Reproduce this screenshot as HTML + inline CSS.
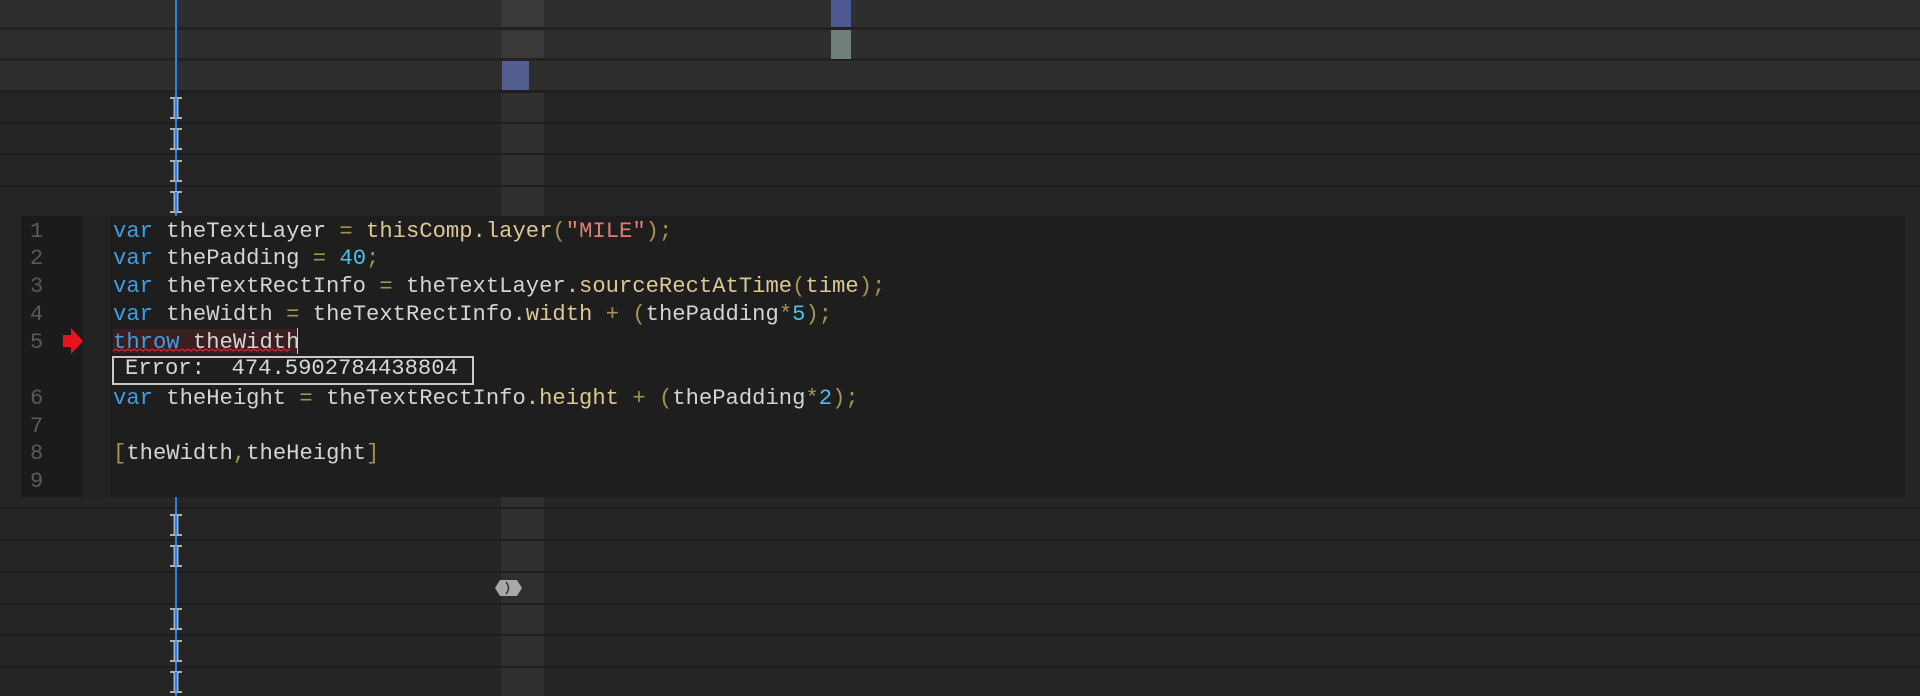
<!DOCTYPE html>
<html><head><meta charset="utf-8"><style>
body{margin:0;width:1920px;height:696px;background:#252525;position:relative;overflow:hidden;font-family:"Liberation Mono",monospace}
.a{position:absolute}
.code{position:absolute;left:113px;font-size:22.2px;white-space:pre;color:#d4d4d4;line-height:28px}
.ln{position:absolute;left:30px;font-size:22px;color:#5a5a5a;line-height:28px}
.k{color:#3f9de0}.f{color:#dcc893}.p{color:#a4944f}.s{color:#e57c72}.n{color:#46c3ea}
</style></head><body>
<div class="a" style="left:0;top:0;width:1920px;height:91px;background:#2e2e2e"></div>
<div class="a" style="left:0;top:27px;width:1920px;height:3px;background:#222"></div>
<div class="a" style="left:0;top:58px;width:1920px;height:3px;background:#222"></div>
<div class="a" style="left:0;top:90px;width:1920px;height:3px;background:#1f1f1f"></div>
<div class="a" style="left:0;top:122px;width:1920px;height:2px;background:#1e1e1e"></div>
<div class="a" style="left:0;top:153px;width:1920px;height:2px;background:#1e1e1e"></div>
<div class="a" style="left:0;top:185px;width:1920px;height:2px;background:#1e1e1e"></div>
<div class="a" style="left:0;top:507px;width:1920px;height:2px;background:#1e1e1e"></div>
<div class="a" style="left:0;top:539px;width:1920px;height:2px;background:#1e1e1e"></div>
<div class="a" style="left:0;top:571px;width:1920px;height:2px;background:#1e1e1e"></div>
<div class="a" style="left:0;top:603px;width:1920px;height:2px;background:#1e1e1e"></div>
<div class="a" style="left:0;top:634px;width:1920px;height:2px;background:#1e1e1e"></div>
<div class="a" style="left:0;top:666px;width:1920px;height:2px;background:#1e1e1e"></div>
<div class="a" style="left:501px;top:0;width:43px;height:27px;background:#393939"></div>
<div class="a" style="left:501px;top:30px;width:43px;height:28px;background:#393939"></div>
<div class="a" style="left:501px;top:93px;width:43px;height:603px;background:#2f2f2f"></div>
<div class="a" style="left:501px;top:122px;width:43px;height:2px;background:#1e1e1e"></div>
<div class="a" style="left:501px;top:153px;width:43px;height:2px;background:#1e1e1e"></div>
<div class="a" style="left:501px;top:185px;width:43px;height:2px;background:#1e1e1e"></div>
<div class="a" style="left:501px;top:507px;width:43px;height:2px;background:#1e1e1e"></div>
<div class="a" style="left:501px;top:539px;width:43px;height:2px;background:#1e1e1e"></div>
<div class="a" style="left:501px;top:571px;width:43px;height:2px;background:#1e1e1e"></div>
<div class="a" style="left:501px;top:603px;width:43px;height:2px;background:#1e1e1e"></div>
<div class="a" style="left:501px;top:634px;width:43px;height:2px;background:#1e1e1e"></div>
<div class="a" style="left:501px;top:666px;width:43px;height:2px;background:#1e1e1e"></div>
<div class="a" style="left:502px;top:61px;width:27px;height:29px;background:#535e8f"></div>
<div class="a" style="left:831px;top:0;width:20px;height:27px;background:#4d5791"></div>
<div class="a" style="left:831px;top:30px;width:20px;height:29px;background:#6f7f7b"></div>
<div class="a" style="left:175px;top:0;width:2px;height:696px;background:#2f80e0"></div>
<svg class="a" style="left:0;top:0" width="600" height="696">
<defs><g id="ib"><rect x="-2.5" y="-10" width="5" height="20" fill="#8fb4dc"/><rect x="-6" y="-11" width="12" height="2" fill="#b0b0b0"/><rect x="-6" y="9" width="12" height="2" fill="#b0b0b0"/><rect x="-1" y="-10" width="2" height="20" fill="#2f80e0"/></g></defs>
<use href="#ib" x="176" y="108"/><use href="#ib" x="176" y="139"/><use href="#ib" x="176" y="171"/><use href="#ib" x="176" y="202"/>
<use href="#ib" x="176" y="525"/><use href="#ib" x="176" y="556"/><use href="#ib" x="176" y="619"/><use href="#ib" x="176" y="651"/><use href="#ib" x="176" y="682"/>
<polygon points="495,588 500,580 517,580 522,588 517,596 500,596" fill="#a8a8a8"/>
<path d="M506 582 Q511 588 506 594" stroke="#333" stroke-width="1.5" fill="none"/>
</svg>
<div class="a" style="left:21px;top:216px;width:1884px;height:281px;background:#1e1e1e"></div>
<div class="a" style="left:21px;top:216px;width:62px;height:281px;background:#1b1b1b"></div>
<div class="a" style="left:83px;top:216px;width:27px;height:281px;background:#222"></div>
<div class="a" style="left:113px;top:329px;width:185px;height:24px;background:#3a1e22"></div>
<div class="a" style="left:297px;top:328px;width:1px;height:26px;background:#ccc"></div>
<svg class="a" style="left:113px;top:348px" width="186" height="6"><path d="M0 3 l3 -2 l3 2 l3 -2 l3 2 l3 -2 l3 2 l3 -2 l3 2 l3 -2 l3 2 l3 -2 l3 2 l3 -2 l3 2 l3 -2 l3 2 l3 -2 l3 2 l3 -2 l3 2 l3 -2 l3 2 l3 -2 l3 2 l3 -2 l3 2 l3 -2 l3 2 l3 -2 l3 2 l3 -2 l3 2 l3 -2 l3 2 l3 -2 l3 2 l3 -2 l3 2 l3 -2 l3 2 l3 -2 l3 2 l3 -2 l3 2 l3 -2 l3 2 l3 -2 l3 2 l3 -2 l3 2 l3 -2 l3 2 l3 -2 l3 2 l3 -2 l3 2 l3 -2 l3 2 l3 -2" stroke="#e0202a" stroke-width="1.3" fill="none"/></svg>
<svg class="a" style="left:63px;top:328px" width="20" height="26"><polygon points="0,7 8,7 8,0 20,13 8,26 8,19 0,19" fill="#e8131b"/></svg>
<div class="a" style="left:112px;top:356px;width:358px;height:25px;border:2px solid #c8c8c8"></div>
<div class="code" style="top:355px;left:125px;color:#d8d8d8">Error:  474.5902784438804</div>
<div class="ln" style="top:218px">1</div>
<div class="ln" style="top:245px">2</div>
<div class="ln" style="top:273px">3</div>
<div class="ln" style="top:301px">4</div>
<div class="ln" style="top:329px">5</div>
<div class="ln" style="top:385px">6</div>
<div class="ln" style="top:413px">7</div>
<div class="ln" style="top:440px">8</div>
<div class="ln" style="top:468px">9</div>
<div class="code" style="top:218px"><span class="k">var</span> theTextLayer <span class="p">=</span> <span class="f">thisComp.layer</span><span class="p">(</span><span class="s">"MILE"</span><span class="p">);</span></div>
<div class="code" style="top:245px"><span class="k">var</span> thePadding <span class="p">=</span> <span class="n">40</span><span class="p">;</span></div>
<div class="code" style="top:273px"><span class="k">var</span> theTextRectInfo <span class="p">=</span> theTextLayer<span class="f">.sourceRectAtTime</span><span class="p">(</span><span class="f">time</span><span class="p">);</span></div>
<div class="code" style="top:301px"><span class="k">var</span> theWidth <span class="p">=</span> theTextRectInfo<span class="f">.width</span> <span class="p">+ (</span>thePadding<span class="p">*</span><span class="n">5</span><span class="p">);</span></div>
<div class="code" style="top:329px"><span class="k">throw</span> theWidth</div>
<div class="code" style="top:385px"><span class="k">var</span> theHeight <span class="p">=</span> theTextRectInfo<span class="f">.height</span> <span class="p">+ (</span>thePadding<span class="p">*</span><span class="n">2</span><span class="p">);</span></div>
<div class="code" style="top:440px"><span class="p">[</span>theWidth<span class="p">,</span>theHeight<span class="p">]</span></div>
</body></html>
